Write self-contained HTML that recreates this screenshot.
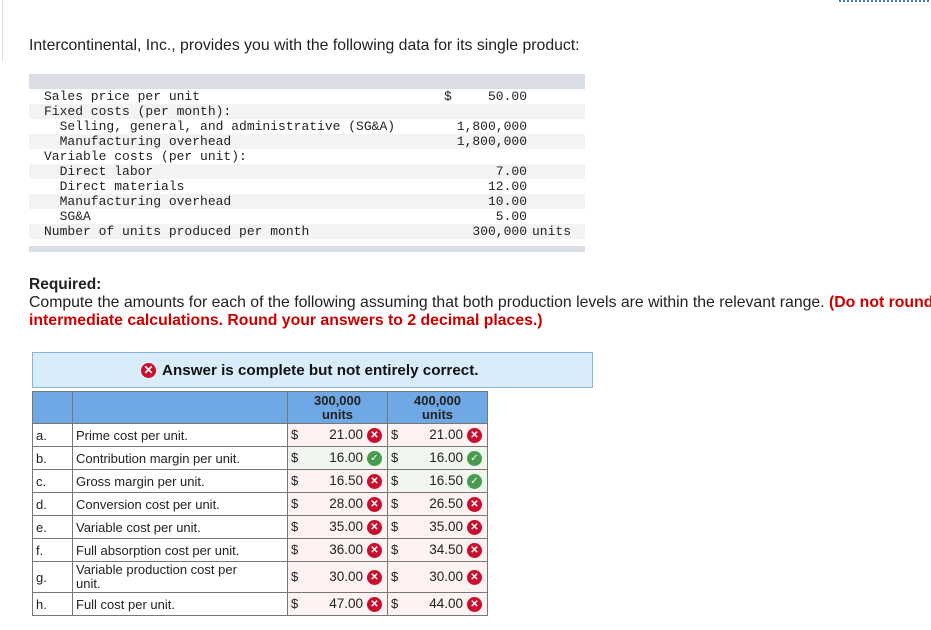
<!DOCTYPE html>
<html><head><meta charset="utf-8"><style>
*{margin:0;padding:0;box-sizing:border-box}
body{width:931px;height:630px;background:#fff;position:relative;overflow:hidden;font-family:"Liberation Sans",Arial,sans-serif;color:#222}
.a{position:absolute;white-space:nowrap}
.m{font-family:"Liberation Mono",monospace;font-size:13px;line-height:15px;color:#222}
.row{position:absolute;left:29px;width:556px;height:15px}
table{position:absolute;left:32px;top:391px;border-collapse:collapse;font-size:13px}
td{border:1px solid #777;padding:0 3px;height:23px}
th{border:1px solid #777;background:#6fa8e4;font-size:13px;line-height:14px;font-weight:bold;color:#222;height:32px}
.v{position:relative}
.bad{background:#fdf1f1}
.ok{background:#f1f7ef}
.ic{display:inline-block;width:15px;height:15px;border-radius:50%;vertical-align:middle;position:absolute;right:5px;top:50%;margin-top:-7.5px}
.x{background:#c8102e}
.c{background:#4a9a4f}
.d{position:absolute;left:3px;top:50%;margin-top:-8px;line-height:16px}
.n{position:absolute;right:24px;top:50%;margin-top:-8px;line-height:16px;font-size:13.5px}
.ic.x::after{content:"✕";color:#fff;font-size:10px;font-weight:bold;font-style:normal;display:block;text-align:center;line-height:15px}
.ic.c::after{content:"✓";color:#fff;font-size:10px;font-weight:bold;font-style:normal;display:block;text-align:center;line-height:15px;font-family:"DejaVu Sans",sans-serif}
</style></head><body>
<div class="a" style="left:2px;top:0;width:1px;height:62px;background:#ddd"></div>
<div class="a" style="left:839px;top:0;width:91px;height:2px;background:repeating-linear-gradient(90deg,#3f79c6 0 2px,transparent 2px 4px)"></div>
<div class="a" style="left:29px;top:37px;font-size:15.8px">Intercontinental, Inc., provides you with the following data for its single product:</div>

<div class="a" style="left:29px;top:74px;width:556px;height:15px;background:#d9dde6"></div>
<div class="row" style="top:104px;background:#f3f3f3"></div>
<div class="row" style="top:134px;background:#f3f3f3"></div>
<div class="row" style="top:164px;background:#f3f3f3"></div>
<div class="row" style="top:194px;background:#f3f3f3"></div>
<div class="row" style="top:224px;background:#f3f3f3"></div>
<div class="a" style="left:29px;top:246px;width:556px;height:6px;background:#d9dde6"></div>
<div class="a m" style="left:44px;top:89px">Sales price per unit<br>Fixed costs (per month):<br>&nbsp;&nbsp;Selling, general, and administrative (SG&amp;A)<br>&nbsp;&nbsp;Manufacturing overhead<br>Variable costs (per unit):<br>&nbsp;&nbsp;Direct labor<br>&nbsp;&nbsp;Direct materials<br>&nbsp;&nbsp;Manufacturing overhead<br>&nbsp;&nbsp;SG&amp;A<br>Number of units produced per month</div>
<div class="a m" style="left:444px;top:89px">$</div>
<div class="a m" style="right:404px;top:89px;text-align:right">50.00<br><br>1,800,000<br>1,800,000<br><br>7.00<br>12.00<br>10.00<br>5.00<br>300,000</div>
<div class="a m" style="left:532px;top:224px">units</div>

<div class="a" style="left:29px;top:276px;font-size:15.5px;font-weight:bold">Required:</div>
<div class="a" style="left:29px;top:294px;font-size:15.8px">Compute the amounts for each of the following assuming that both production levels are within the relevant range. <b style="color:#c00">(Do not round</b></div>
<div class="a" style="left:29px;top:312px;font-size:15.8px;font-weight:bold;color:#c00">intermediate calculations. Round your answers to 2 decimal places.)</div>

<div class="a" style="left:32px;top:352px;width:561px;height:36px;background:#d9ecfa;border:1px solid #8ab4dd"></div>
<div class="a" style="left:141px;top:363px;width:15px;height:15px;border-radius:50%;background:#c8102e;color:#fff;font-size:12px;line-height:15px;text-align:center;font-weight:bold">✕</div>
<div class="a" style="left:162px;top:362px;font-size:15.2px;font-weight:bold;color:#111">Answer is complete but not entirely correct.</div>

<table>
<tr><th style="width:40px"></th><th style="width:215px"></th><th style="width:100px">300,000<br>units</th><th style="width:100px">400,000<br>units</th></tr>
<tr><td>a.</td><td>Prime cost per unit.</td><td class="v bad"><span class="d">$</span><span class="n">21.00</span><i class="ic x"></i></td><td class="v bad"><span class="d">$</span><span class="n">21.00</span><i class="ic x"></i></td></tr>
<tr><td>b.</td><td>Contribution margin per unit.</td><td class="v ok"><span class="d">$</span><span class="n">16.00</span><i class="ic c"></i></td><td class="v ok"><span class="d">$</span><span class="n">16.00</span><i class="ic c"></i></td></tr>
<tr><td>c.</td><td>Gross margin per unit.</td><td class="v bad"><span class="d">$</span><span class="n">16.50</span><i class="ic x"></i></td><td class="v ok"><span class="d">$</span><span class="n">16.50</span><i class="ic c"></i></td></tr>
<tr><td>d.</td><td>Conversion cost per unit.</td><td class="v bad"><span class="d">$</span><span class="n">28.00</span><i class="ic x"></i></td><td class="v bad"><span class="d">$</span><span class="n">26.50</span><i class="ic x"></i></td></tr>
<tr><td>e.</td><td>Variable cost per unit.</td><td class="v bad"><span class="d">$</span><span class="n">35.00</span><i class="ic x"></i></td><td class="v bad"><span class="d">$</span><span class="n">35.00</span><i class="ic x"></i></td></tr>
<tr><td>f.</td><td>Full absorption cost per unit.</td><td class="v bad"><span class="d">$</span><span class="n">36.00</span><i class="ic x"></i></td><td class="v bad"><span class="d">$</span><span class="n">34.50</span><i class="ic x"></i></td></tr>
<tr><td style="height:31px">g.</td><td style="line-height:14px">Variable production cost per<br>unit.</td><td class="v bad"><span class="d">$</span><span class="n">30.00</span><i class="ic x"></i></td><td class="v bad"><span class="d">$</span><span class="n">30.00</span><i class="ic x"></i></td></tr>
<tr><td>h.</td><td>Full cost per unit.</td><td class="v bad"><span class="d">$</span><span class="n">47.00</span><i class="ic x"></i></td><td class="v bad"><span class="d">$</span><span class="n">44.00</span><i class="ic x"></i></td></tr>
</table>
</body></html>
